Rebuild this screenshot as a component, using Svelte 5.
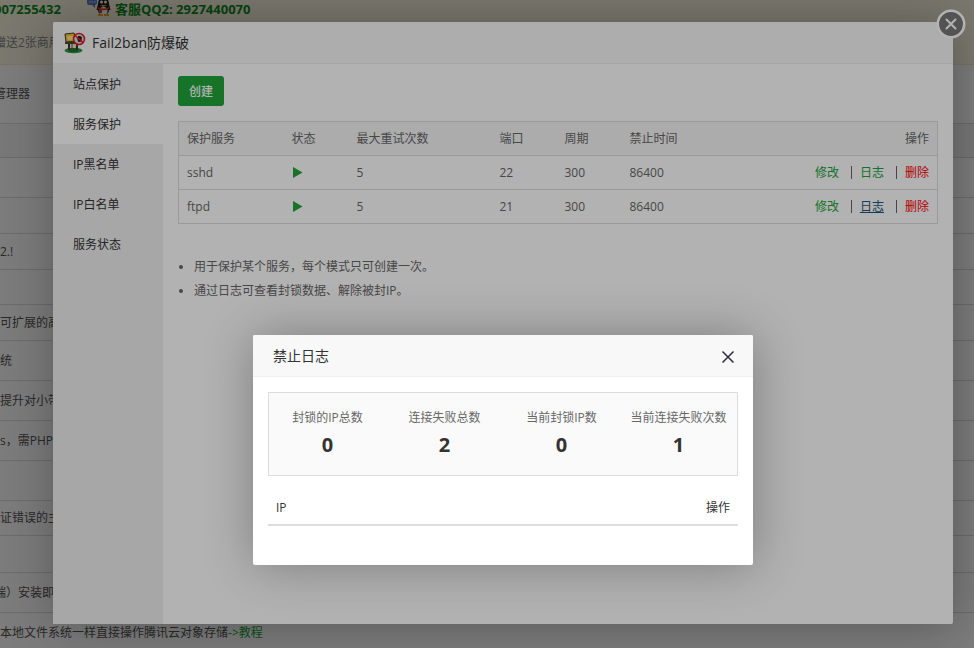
<script lang="ts">
	interface PageRow {
		height: number;
		text?: string;
		cut?: boolean;
		head?: boolean;
		link?: string;
	}

	const pageRows: PageRow[] = [
		{ height: 59, text: '管理器', cut: true },
		{ height: 34, head: true },
		{ height: 40 },
		{ height: 36 },
		{ height: 36, text: '2.!' },
		{ height: 35 },
		{ height: 36, text: '可扩展的高性能' },
		{ height: 40, text: '统' },
		{ height: 40, text: '提升对小带宽' },
		{ height: 40, text: 's，需PHP' },
		{ height: 40 },
		{ height: 35, text: '证错误的主机' },
		{ height: 37 },
		{ height: 40, text: '端）安装即可', cut: true },
		{ height: 40, text: '本地文件系统一样直接操作腾讯云对象存储', link: '->教程' }
	];

	const tabs = ['站点保护', '服务保护', 'IP黑名单', 'IP白名单', '服务状态'];
	let current = $state(1);

	const services = [
		{ name: 'sshd', retry: 5, port: 22, period: 300, ban: 86400 },
		{ name: 'ftpd', retry: 5, port: 21, period: 300, ban: 86400 }
	];
	let opened = $state('ftpd');

	const stats = [
		{ label: '封锁的IP总数', value: 0 },
		{ label: '连接失败总数', value: 2 },
		{ label: '当前封锁IP数', value: 0 },
		{ label: '当前连接失败次数', value: 1 }
	];

	const openLog = (e: MouseEvent, name: string) => {
		e.preventDefault();
		opened = name;
	};
</script>

<main class="page">
	<div class="notice">
		<div class="contacts">
			<span class="cut">007255432</span>
			<svg class="qq" viewBox="0 0 24 18" width="24" height="18" aria-hidden="true">
				<path d="M0 2q0-2 2-2h6q2 0 2 2v3q0 2-2 2l0 3-3-3H2q-2 0-2-2z" fill="#5b7fc4" />
				<path d="M2 4h1.500M4.500 4h1.500M7 4h1.500" stroke="#dde6f8" />
				<path d="M11 6Q11 0 16.500 0T22 6L23.500 12H9.500Z" fill="#222" />
				<ellipse cx="16.500" cy="12" rx="5.500" ry="5" fill="#222" />
				<ellipse cx="16.500" cy="13" rx="4" ry="4" fill="#fff" />
				<circle cx="14.500" cy="4" r="1.500" fill="#fff" />
				<circle cx="18.500" cy="4" r="1.500" fill="#fff" />
				<path d="M13 7h7l-3.500 2z" fill="#f5a623" />
				<path d="M11 9q5.500 3 11 0v2q-3 1.500-7 1.200V15h-2v-3l-2-1z" fill="#e33" />
				<path d="M11 16h5v2h-5zM17 16h5v2h-5z" fill="#f5a623" />
			</svg>
			<span>客服QQ2: 2927440070</span>
		</div>
		<p class="cut">赠送2张商用证</p>
	</div>
	{#each pageRows as row, index (index)}
		<div class="page-row" class:head={row.head} style="height: {row.height}px">
			{#if row.text}
				<span class:cut={row.cut}>{row.text}</span>
			{/if}
			{#if row.link}
				<a href="#guide">{row.link}</a>
			{/if}
		</div>
	{/each}
</main>

<div class="shade"></div>

<section class="layer layer-main" aria-label="Fail2ban防爆破">
	<header class="layer-title">
		<svg viewBox="0 0 22 22" width="22" height="22" aria-hidden="true">
			<ellipse cx="9.500" cy="18.500" rx="9" ry="2.800" fill="#2e9440" />
			<path d="M4 18q1-3 5-2t6 1l-2 3-7 0z" fill="#1d7030" />
			<path d="M5 11v7M13 11v7" stroke="#3d3830" stroke-width="2" />
			<path d="M6 12h6v4H6z" fill="#e4dcc6" />
			<path d="M8 12v6" stroke="#555" />
			<path d="M1 2l9-1 3 8-11 1z" fill="#e5c234" stroke="#41382c" />
			<path d="M3 4h6l1 4H4z" fill="#f8e174" />
			<path d="M1 10h13v2H1z" fill="#4b4439" />
			<circle cx="15" cy="7" r="5.500" fill="#ddd" stroke="#dd2027" stroke-width="1.600" />
			<ellipse cx="15.500" cy="7" rx="2" ry="3" fill="#222" />
			<path d="M14 4.500l4 1M14 9l4 0M13.500 7h4.500" stroke="#222" />
			<path d="M11 3.500l8 7" stroke="#dd2027" stroke-width="1.600" />
		</svg>
		<h2>Fail2ban防爆破</h2>
	</header>
	<div class="layer-body">
		<nav class="tabs">
			{#each tabs as tab, index (tab)}
				<button class:active={index === current} onclick={() => (current = index)}>{tab}</button>
			{/each}
		</nav>
		<div class="panel">
			<button class="create">创建</button>
			<table class="services">
				<colgroup>
					<col class="c-name" />
					<col class="c-small" />
					<col class="c-retry" />
					<col class="c-small" />
					<col class="c-small" />
					<col />
					<col />
				</colgroup>
				<thead>
					<tr>
						<th>保护服务</th>
						<th>状态</th>
						<th>最大重试次数</th>
						<th>端口</th>
						<th>周期</th>
						<th>禁止时间</th>
						<th class="right">操作</th>
					</tr>
				</thead>
				<tbody>
					{#each services as s (s.name)}
						<tr>
							<td>{s.name}</td>
							<td>
								<svg class="play" viewBox="0 0 12 12" width="12" height="12" role="img" aria-label="运行中">
									<path d="M1 0L10.500 5.500L1 11z" fill="#20a53a" />
								</svg>
							</td>
							<td>{s.retry}</td>
							<td>{s.port}</td>
							<td>{s.period}</td>
							<td>{s.ban}</td>
							<td>
								<div class="actions">
									<a href="#edit">修改</a>
									<i></i>
									<a
										href="#log"
										class:visited={opened === s.name}
										onclick={(e) => openLog(e, s.name)}>日志</a
									>
									<i></i>
									<a href="#delete" class="danger">删除</a>
								</div>
							</td>
						</tr>
					{/each}
				</tbody>
			</table>
			<ul class="help">
				<li>用于保护某个服务，每个模式只可创建一次。</li>
				<li>通过日志可查看封锁数据、解除被封IP。</li>
			</ul>
		</div>
	</div>
	<button class="close-round" aria-label="关闭">
		<svg viewBox="0 0 30 30" width="30" height="30">
			<circle cx="15" cy="15" r="13.200" fill="#787878" stroke="#fff" stroke-width="2.600" />
			<path d="M10.500 10.500l9 9M19.500 10.500l-9 9" stroke="#fff" stroke-width="2" stroke-linecap="round" />
		</svg>
	</button>
</section>

<div class="shade"></div>

{#if opened}
	<section class="layer layer-log" role="dialog" aria-label="禁止日志">
		<header class="layer-title">
			<h2>禁止日志</h2>
			<button class="close" aria-label="关闭" onclick={() => (opened = '')}>
				<svg viewBox="0 0 14 14" width="14" height="14">
					<path d="M1.500 1.500l11 11M12.500 1.500l-11 11" stroke="#2e2d3c" stroke-width="1.500" />
				</svg>
			</button>
		</header>
		<div class="log-body">
			<dl class="stats">
				{#each stats as stat (stat.label)}
					<div>
						<dt>{stat.label}</dt>
						<dd>{stat.value}</dd>
					</div>
				{/each}
			</dl>
			<table class="ips">
				<thead>
					<tr>
						<th>IP</th>
						<th class="right">操作</th>
					</tr>
				</thead>
			</table>
		</div>
	</section>
{/if}

<style>
	:global(body) {
		background: #fff;
		color: #666;
		font: 12px/20px 'Open Sans', 'Noto Sans CJK SC', sans-serif;
	}
	:global(#app) {
		position: relative;
		height: 100vh;
		overflow: hidden;
	}
	* {
		box-sizing: border-box;
	}
	button {
		padding: 0;
		border: 0;
		background: none;
		color: inherit;
		font: inherit;
		cursor: pointer;
	}
	a {
		color: #20a53a;
		text-decoration: none;
	}
	p,
	h2,
	dl,
	dd {
		margin: 0;
	}
	th {
		font-weight: normal;
		text-align: left;
	}
	.right {
		text-align: right;
	}
	svg {
		flex: none;
	}

	/* page behind the dialogs, scrolled a little to the right */
	.page {
		height: 100%;
		overflow: hidden;
		color: #555;
		white-space: nowrap;
	}
	.cut {
		margin-left: -6px;
	}
	.notice {
		height: 65px;
		border-bottom: 1px solid #faebcc;
		background: #fcf8e3;
		color: #888;
	}
	.contacts {
		display: flex;
		align-items: center;
		height: 18px;
		color: #0a8a22;
		font-size: 13px;
		font-weight: bold;
	}
	.qq {
		margin: 0 4px 4px 26px;
	}
	.notice p {
		margin-top: 15px;
	}
	.page-row {
		display: flex;
		align-items: center;
		border-bottom: 1px solid #ddd;
	}
	.page-row.head {
		background: #f6f6f6;
	}

	.shade {
		position: absolute;
		inset: 0;
		background: rgba(0, 0, 0, 0.3);
	}
	.layer {
		position: absolute;
		display: flex;
		flex-direction: column;
		border-radius: 2px;
		background: #fff;
		box-shadow: 1px 1px 50px rgba(0, 0, 0, 0.3);
	}
	.layer-main {
		inset: 22px 21px 24px 53px;
	}
	.layer-log {
		top: 335px;
		left: 253px;
		width: 500px;
		min-height: 230px;
	}
	.layer-title {
		display: flex;
		flex: none;
		align-items: center;
		height: 42px;
		padding: 0 18px 0 20px;
		border-bottom: 1px solid #eee;
		border-radius: 2px 2px 0 0;
		background: #f8f8f8;
		color: #333;
	}
	.layer-main .layer-title {
		gap: 6px;
		padding-left: 11px;
	}
	.layer-title h2 {
		font-size: 14px;
		font-weight: normal;
	}
	.layer-body {
		display: flex;
		flex: 1;
	}
	.close-round {
		position: absolute;
		top: -13px;
		right: -13px;
		width: 30px;
		height: 30px;
	}

	.tabs {
		flex: none;
		width: 110px;
		background: #f0f0f0;
		color: #333;
	}
	.tabs button {
		display: block;
		width: 100%;
		height: 40px;
		padding: 2px 0 0 20px;
		text-align: left;
	}
	.tabs .active {
		background: #fff;
	}
	.panel {
		flex: 1;
		padding: 12px 15px;
	}
	.create {
		display: block;
		height: 30px;
		padding: 2px 11px 0;
		border-radius: 3px;
		background: #20a53a;
		color: #fff;
		font-weight: 500;
	}

	.services {
		width: 100%;
		margin-top: 15px;
		border: 1px solid #ddd;
		border-collapse: collapse;
		table-layout: fixed;
	}
	.services th,
	.services td {
		height: 34px;
		padding: 0 8px;
		border-bottom: 1px solid #ddd;
	}
	.services th {
		background: #f6f6f6;
	}
	.c-name {
		width: 105px;
	}
	.c-small {
		width: 65px;
	}
	.c-retry {
		width: 143px;
	}
	.play {
		display: block;
	}
	.actions {
		display: flex;
		align-items: center;
		justify-content: flex-end;
	}
	.actions i {
		width: 1px;
		height: 13px;
		margin: 0 8px 0 12px;
		background: #666;
	}
	.actions .visited {
		color: #23527c;
		text-decoration: underline;
	}
	.actions .danger {
		color: #f00;
	}
	.help {
		margin: 31px 0 0;
		padding-left: 16px;
		line-height: 24px;
	}

	.close {
		display: flex;
		margin-left: auto;
		padding-top: 2px;
	}
	.log-body {
		padding: 15px;
	}
	.stats {
		display: grid;
		grid-template-columns: repeat(4, 1fr);
		padding: 15px 0 14px;
		border: 1px solid #ddd;
		background: #fafafa;
		text-align: center;
	}
	.stats dd {
		color: #333;
		font-size: 20px;
		font-weight: bold;
		line-height: 33px;
	}
	.ips {
		width: 100%;
		margin-top: 15px;
		border-collapse: collapse;
		color: #333;
	}
	.ips th {
		height: 34px;
		padding: 0 8px;
		border-bottom: 2px solid #ddd;
	}
</style>
